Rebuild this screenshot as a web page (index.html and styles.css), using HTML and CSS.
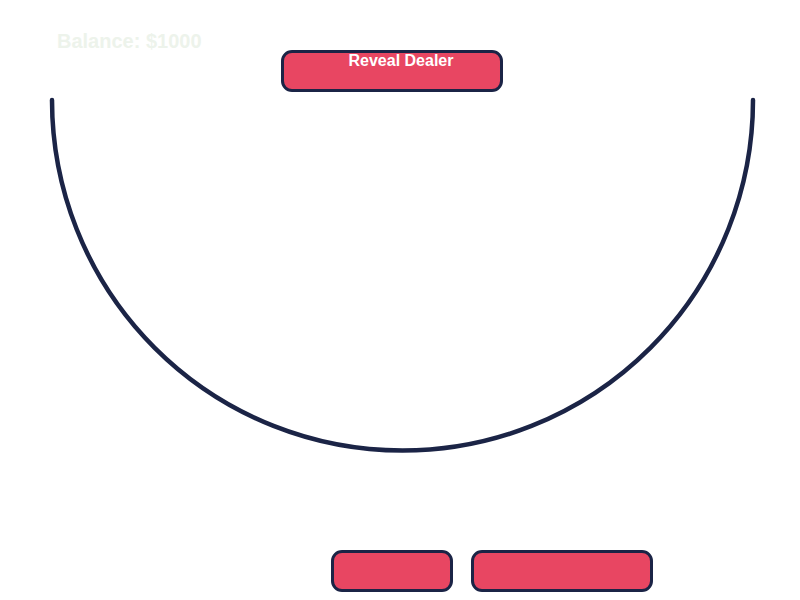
FILE: index.html
```html
<!DOCTYPE html>
<html>
<head>
<meta charset="utf-8">
<link rel="stylesheet" href="styles.css">
</head>
<body>
<div class="game">
  <div class="balance">Balance: $1000</div>
  <button class="btn btn-reveal">Reveal Dealer</button>
  <svg class="table" width="800" height="370" viewBox="0 0 800 370">
    <path d="M52 8 A350.5 350.5 0 0 0 753 8" fill="none" stroke="#1b2446" stroke-width="4.5" stroke-linecap="round"/>
  </svg>
  <div class="actions">
    <button class="btn btn-small"></button>
    <button class="btn btn-wide"></button>
  </div>
</div>
</body>
</html>
```
FILE: styles.css
```css
html, body {
  margin: 0;
  padding: 0;
  background: #ffffff;
}
body {
  font-family: "Liberation Sans", Arial, sans-serif;
  width: 800px;
  height: 600px;
  overflow: hidden;
}
.game {
  display: flex;
  flex-direction: column;
  align-items: flex-start;
}
.balance {
  padding: 32px 0 0 57px;
  font-size: 20px;
  font-weight: bold;
  line-height: 18px;
  color: #edf3eb;
}
.btn {
  box-sizing: border-box;
  height: 42px;
  background: #e84662;
  border: 3px solid #1b2446;
  border-radius: 11px;
  color: #ffffff;
  font-family: "Liberation Sans", Arial, sans-serif;
  font-weight: bold;
  font-size: 16px;
  line-height: 16px;
  padding: 0;
  margin: 0;
  display: flex;
  justify-content: center;
  align-items: flex-start;
}
.btn-reveal {
  margin-left: 281px;
  width: 222px;
  padding-left: 18px;
}
.table {
  display: block;
}
.actions {
  display: flex;
  gap: 18px;
  margin: 88px 0 0 331px;
}
.btn-small { width: 122px; }
.btn-wide { width: 182px; }
```
